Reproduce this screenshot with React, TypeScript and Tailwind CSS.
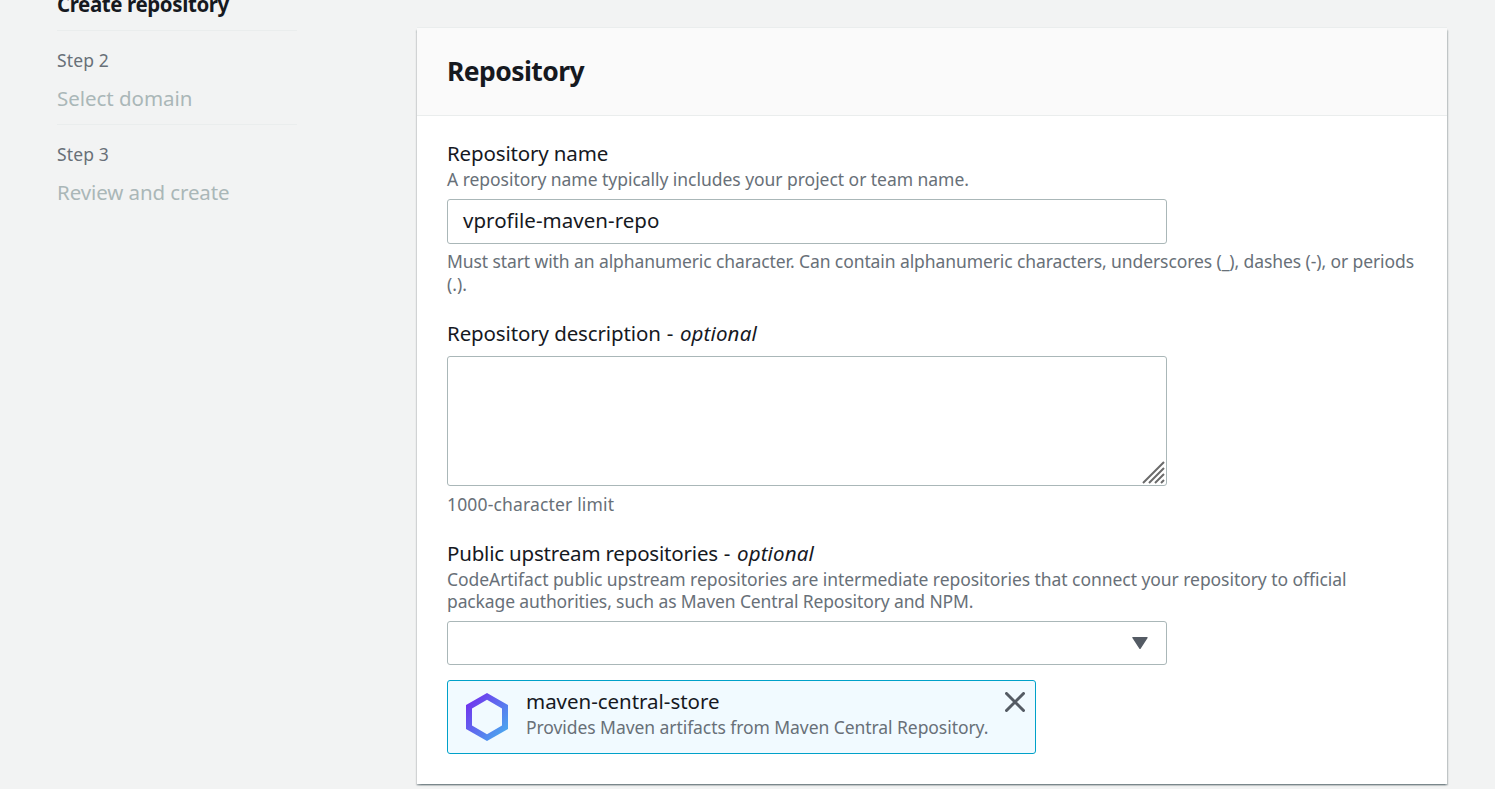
type StepProps = { step: string; title: string; titleClass: string };

function Step({ step, title, titleClass }: StepProps) {
  return (
    <li className="pt-[18px] pb-[11px]">
      <div className="text-[17.5px] leading-[22px] tracking-[0.13px] text-[#687078]">{step}</div>
      <div className={`mt-3 text-[20.5px] leading-[30px] text-[#aab7b8] ${titleClass}`}>{title}</div>
    </li>
  );
}

function FieldLabel({ text, textClass, optional }: { text: string; textClass: string; optional?: boolean }) {
  return (
    <div className="text-[20.5px] leading-[30px] whitespace-pre">
      <span className={textClass}>{text}</span>
      {optional && (
        <>
          <span className="tracking-[0.6px]"> - </span>
          <em className="tracking-[0.14px]">optional</em>
        </>
      )}
    </div>
  );
}

export default function App() {
  return (
    <div className="flex h-[789px] w-[1495px] overflow-hidden bg-[#f2f3f3] font-['Noto_Sans',sans-serif] whitespace-nowrap text-[#16191f]">
      <nav className="ml-[57px] w-[240px] shrink-0">
        <div className="-mt-[11px] h-[41px] text-[20.5px] leading-[30px] font-bold tracking-[-0.4px]">
          Create repository
        </div>
        <ul className="divide-y divide-[#eaeded] border-t border-[#eaeded]">
          <Step step="Step 2" title="Select domain" titleClass="tracking-[-0.03px]" />
          <Step step="Step 3" title="Review and create" titleClass="tracking-[-0.1px]" />
        </ul>
      </nav>

      <main className="mt-7 ml-[120px] h-[756px] w-[1030px] shrink-0 bg-white shadow-[0_-1px_0_0_#eaeded,0_1.5px_1.5px_0_rgba(0,28,36,0.3),1.5px_1.5px_1.5px_0_rgba(0,28,36,0.15),-1.5px_1.5px_1.5px_0_rgba(0,28,36,0.15)]">
        <header className="h-[88px] border-b border-[#eaeded] bg-[#fafafa] px-[30px] pt-[26px]">
          <h2 className="text-[26.5px] leading-[34px] font-bold tracking-[-0.57px]">Repository</h2>
        </header>

        <div className="px-[30px] pt-[22px]">
          <section>
            <FieldLabel text="Repository name" textClass="tracking-[-0.15px]" />
            <p className="text-[17.5px] leading-[22px] tracking-[-0.04px] text-[#687078]">
              A repository name typically includes your project or team name.
            </p>
            <div className="mt-[9px] h-[45px] w-[720px] rounded-[3px] border border-[#aab7b8] bg-white px-[15px] pt-[5px] text-[20.5px] leading-[30px] tracking-[0.03px]">
              vprofile-maven-repo
            </div>
            <p className="mt-[6px] text-[17.5px] leading-[23px] text-[#687078]">
              <span className="tracking-[-0.092px]">
                Must start with an alphanumeric character. Can contain alphanumeric characters, underscores (_), dashes (-), or periods
              </span>
              <br />
              (.).
            </p>
          </section>

          <section className="mt-[22px]">
            <FieldLabel text="Repository description" textClass="tracking-[-0.12px]" optional />
            <div className="mt-2 flex h-[130px] w-[720px] items-end justify-end rounded-[3px] border border-[#aab7b8] bg-white">
              <svg width="24" height="24" viewBox="0 0 24 24" fill="none" stroke="#6b6b6b" strokeWidth="2">
                <path d="M1 22 22 1M7 22 22 7M13 22 22 13M19 22 22 19" />
              </svg>
            </div>
            <p className="mt-[7px] text-[17.5px] leading-[22px] tracking-[0.16px] text-[#687078]">1000-character limit</p>
          </section>

          <section className="mt-[23px]">
            <FieldLabel text="Public upstream repositories" textClass="tracking-[-0.19px]" optional />
            <p className="text-[17.5px] leading-[22px] text-[#687078]">
              <span className="tracking-[-0.055px]">
                CodeArtifact public upstream repositories are intermediate repositories that connect your repository to official
              </span>
              <br />
              <span className="tracking-[-0.125px]">package authorities, such as Maven Central Repository and NPM.</span>
            </p>
            <div className="mt-[9px] flex h-[44px] w-[720px] items-center justify-end rounded-[3px] border border-[#aab7b8] bg-white pr-[18px]">
              <svg width="16" height="12" viewBox="0 0 16 12">
                <path d="M1 .7h14L8 11.3z" fill="#545b64" stroke="#545b64" strokeWidth="1.4" strokeLinejoin="round" />
              </svg>
            </div>

            <div className="mt-[15px] flex h-[74px] w-[589px] items-start rounded-[3px] border border-[#00a1c9] bg-[#f1faff]">
              <svg className="mt-3 ml-[18px] shrink-0" width="42" height="48" viewBox="0 0 42 48">
                <defs>
                  <linearGradient id="hexagon" x1="2" y1="8" x2="40" y2="40" gradientUnits="userSpaceOnUse">
                    <stop stopColor="#7133ee" />
                    <stop offset="1" stopColor="#4aa8ef" />
                  </linearGradient>
                </defs>
                <path
                  fill="url(#hexagon)"
                  fillRule="evenodd"
                  d="M21 0 42 12V36L21 48 0 36V12ZM21 6.8 6 15.4V32.6L21 41.2 36 32.6V15.4Z"
                />
              </svg>
              <div className="mt-[5px] ml-[18px] w-[479px]">
                <div className="text-[20.5px] leading-[30px] tracking-[-0.03px]">maven-central-store</div>
                <div className="text-[17.5px] leading-[22px] tracking-[-0.065px] text-[#687078]">
                  Provides Maven artifacts from Maven Central Repository.
                </div>
              </div>
              <svg className="mt-[11px] shrink-0" width="20" height="20" viewBox="0 0 20 20" fill="none" stroke="#545b64" strokeWidth="3" strokeLinecap="round">
                <path d="m1.5 1.5 17 17M18.5 1.5l-17 17" />
              </svg>
            </div>
          </section>
        </div>
      </main>
    </div>
  );
}
